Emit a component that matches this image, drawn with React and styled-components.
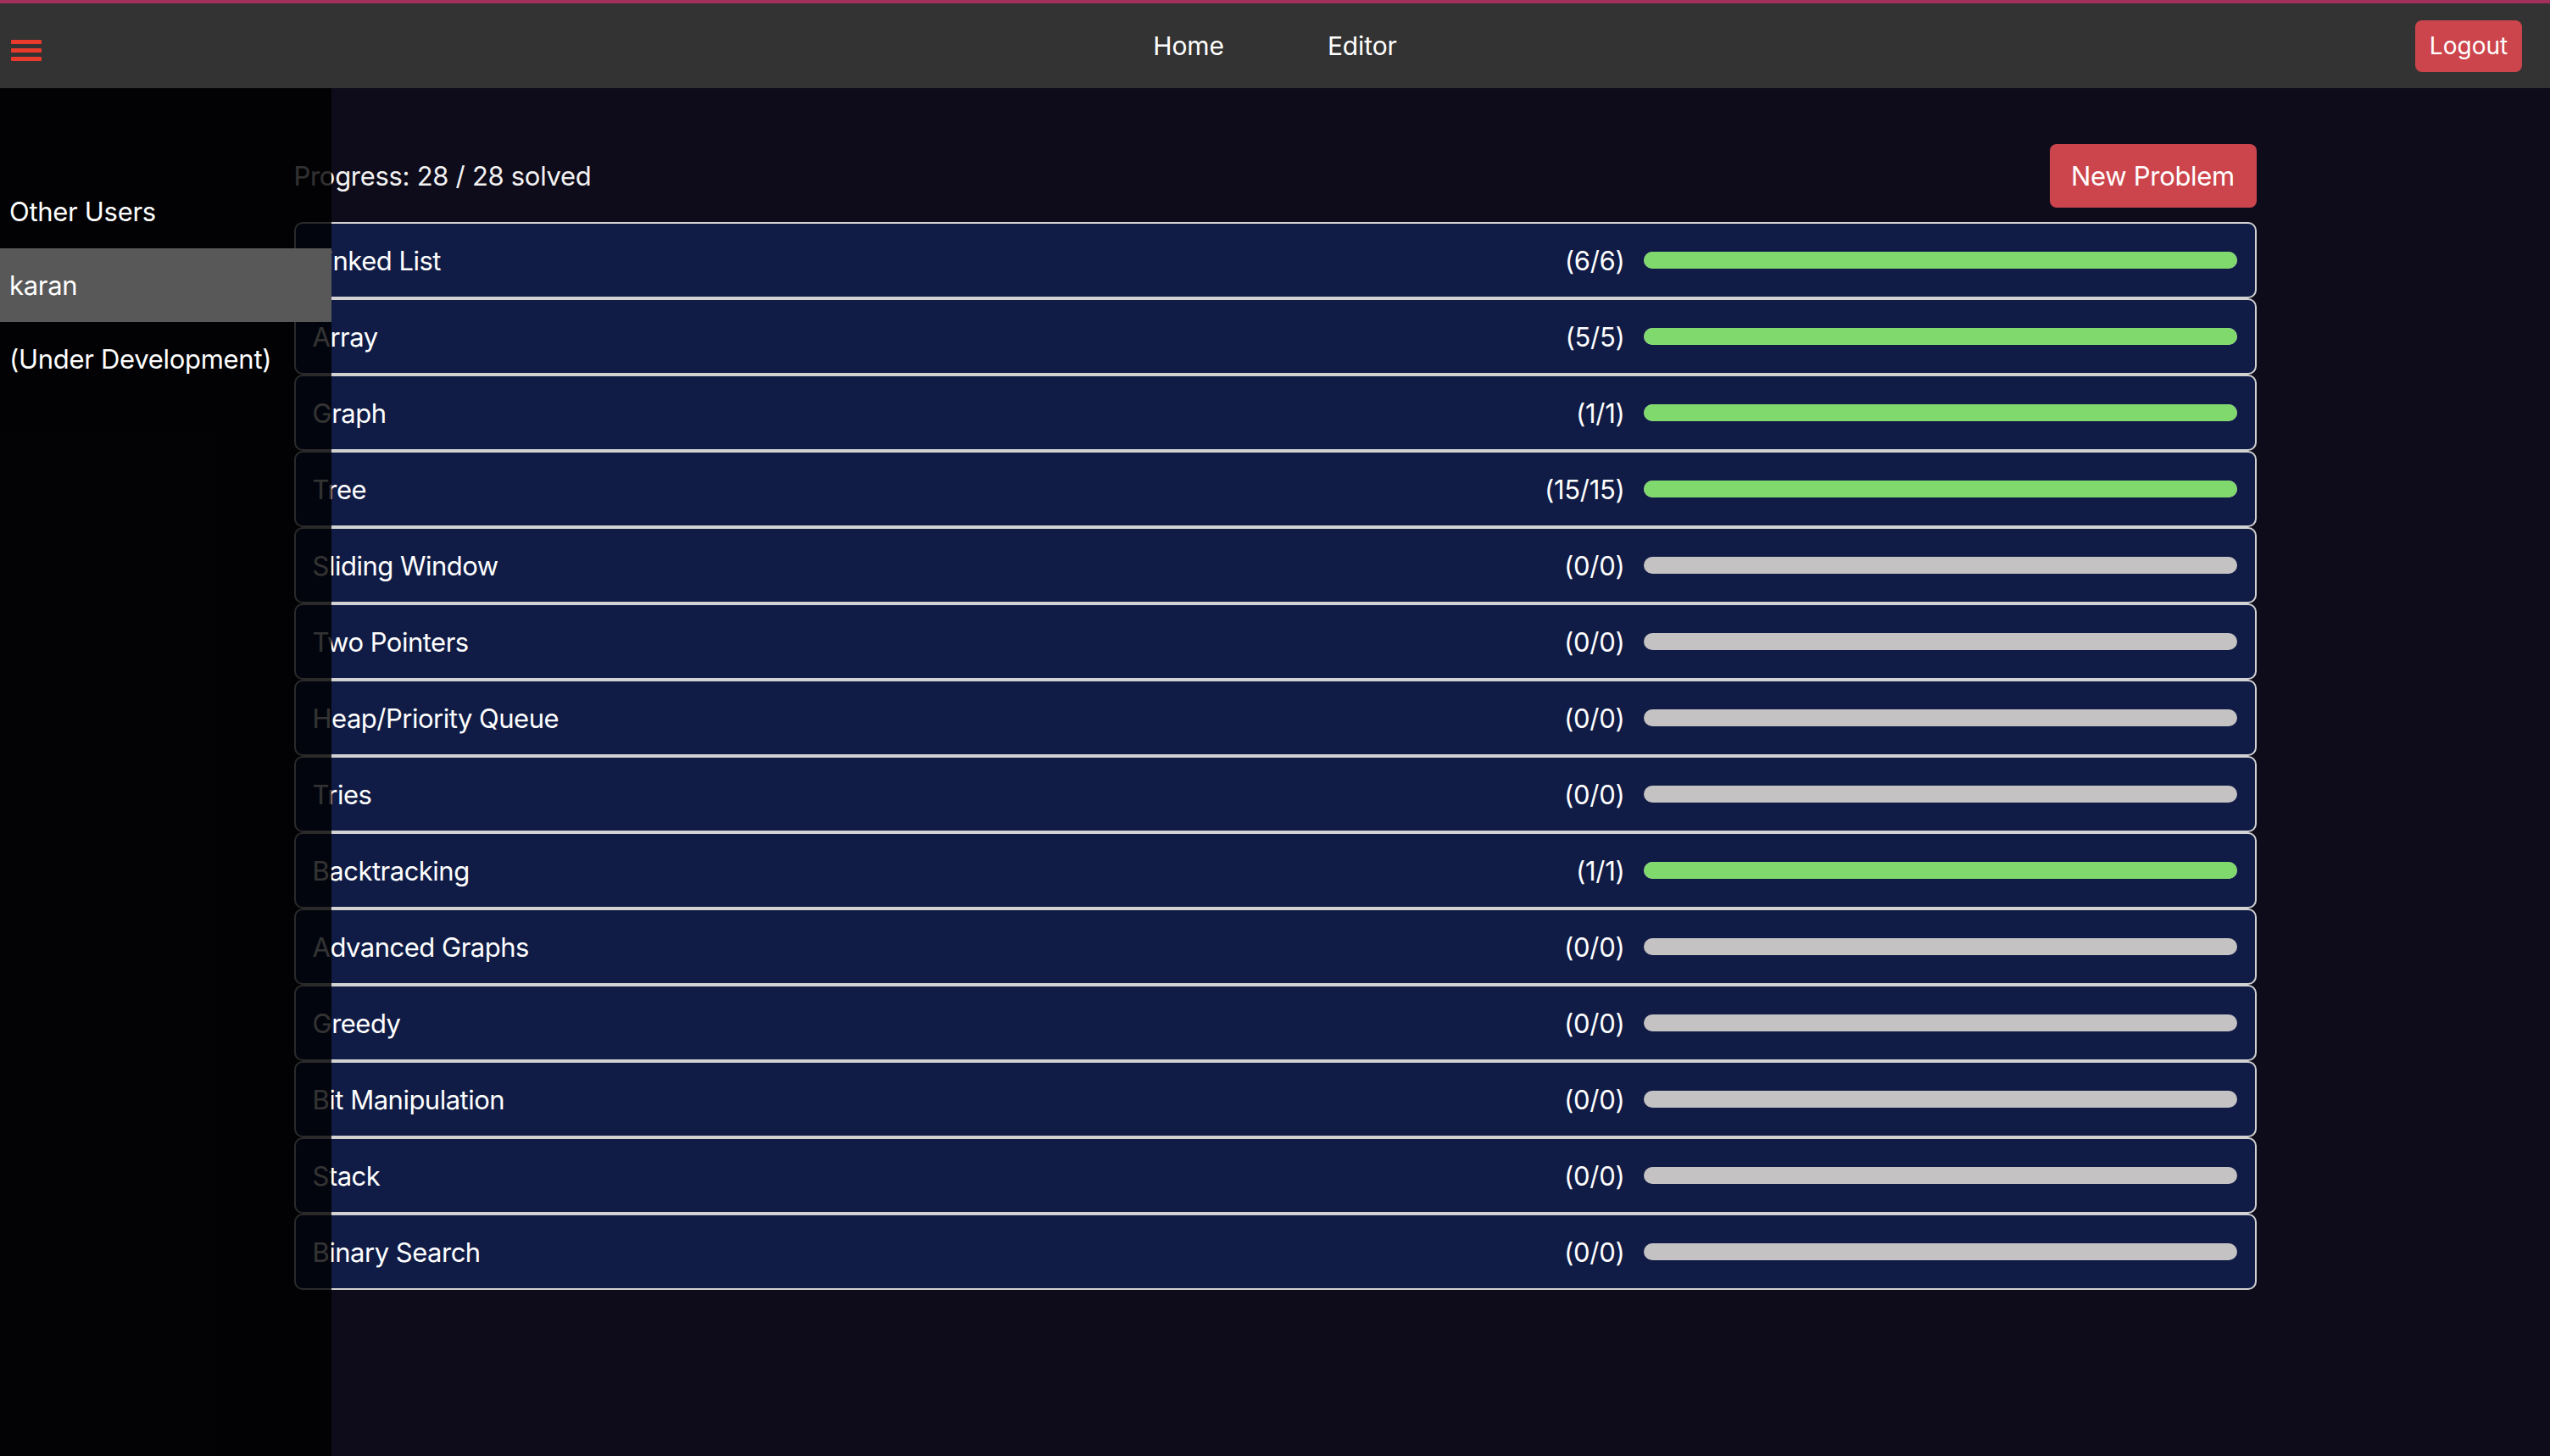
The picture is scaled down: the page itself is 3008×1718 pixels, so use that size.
import React from "react";
import styled, { createGlobalStyle } from "styled-components";

const topics = [
  { name: "Linked List", solved: 6, total: 6 },
  { name: "Array", solved: 5, total: 5 },
  { name: "Graph", solved: 1, total: 1 },
  { name: "Tree", solved: 15, total: 15 },
  { name: "Sliding Window", solved: 0, total: 0 },
  { name: "Two Pointers", solved: 0, total: 0 },
  { name: "Heap/Priority Queue", solved: 0, total: 0 },
  { name: "Tries", solved: 0, total: 0 },
  { name: "Backtracking", solved: 1, total: 1 },
  { name: "Advanced Graphs", solved: 0, total: 0 },
  { name: "Greedy", solved: 0, total: 0 },
  { name: "Bit Manipulation", solved: 0, total: 0 },
  { name: "Stack", solved: 0, total: 0 },
  { name: "Binary Search", solved: 0, total: 0 },
];

const App = () => {
  const solved = topics.reduce((s, t) => s + t.solved, 0);
  const total = topics.reduce((s, t) => s + t.total, 0);

  return (
    <Page>
      <GlobalStyle />
      <StyledHeader>
        <Burger aria-label="menu">
          <span />
          <span />
          <span />
        </Burger>
        <Nav>
          <NavLink href="#">Home</NavLink>
          <NavLink href="#">Editor</NavLink>
        </Nav>
        <LogoutButton>Logout</LogoutButton>
      </StyledHeader>

      <Main>
        <TopRow>
          <ProgressText>
            Progress: {solved} / {total} solved
          </ProgressText>
          <NewButton>New Problem</NewButton>
        </TopRow>
        <List>
          {topics.map((t) => (
            <Row key={t.name}>
              <TopicName>{t.name}</TopicName>
              <Count>
                ({t.solved}/{t.total})
              </Count>
              <Track>
                {t.total > 0 && (
                  <Fill style={{ width: `${(t.solved / t.total) * 100}%` }} />
                )}
              </Track>
            </Row>
          ))}
        </List>
      </Main>

      <Sidebar>
        <SideItem>Other Users</SideItem>
        <SideItem $active>karan</SideItem>
        <SideItem>(Under Development)</SideItem>
      </Sidebar>
    </Page>
  );
};

const GlobalStyle = createGlobalStyle`
  * { box-sizing: border-box; }
  body {
    margin: 0;
    background: #0e0b1a;
    font-family: Inter, "Noto Sans", "Liberation Sans", sans-serif;
    color: #fff;
  }
`;

const Page = styled.div`
  position: relative;
  min-height: 1718px;
  background: #0e0b1a;
`;

const StyledHeader = styled.header`
  height: 104px;
  border-top: 4px solid #a3305c;
  background: #333333;
  display: grid;
  grid-template-columns: 1fr auto 1fr;
  align-items: center;
`;

const Burger = styled.button`
  justify-self: start;
  display: flex;
  flex-direction: column;
  gap: 5px;
  margin: 10px 0 0 13px;
  padding: 0;
  background: none;
  border: none;
  cursor: pointer;

  span {
    display: block;
    width: 36px;
    height: 5px;
    background: #ea3a2b;
    border-radius: 1px;
  }
`;

const Nav = styled.nav`
  display: flex;
  align-items: center;
  gap: 122px;
`;

const NavLink = styled.a`
  color: #fff;
  text-decoration: none;
  font-size: 30px;
  letter-spacing: -0.1px;
`;

const LogoutButton = styled.button`
  justify-self: end;
  margin-right: 33px;
  width: 126px;
  height: 61px;
  border: none;
  border-radius: 8px;
  background: #cd454c;
  color: #fff;
  font-family: inherit;
  font-size: 28px;
  cursor: pointer;
`;

const Main = styled.main`
  width: 2315px;
  margin: 0 auto;
  padding-top: 66px;
`;

const TopRow = styled.div`
  display: flex;
  justify-content: space-between;
  align-items: center;
  margin-bottom: 17px;
`;

const ProgressText = styled.div`
  font-size: 31px;
  letter-spacing: -0.3px;
  color: #f2f2f2;
`;

const NewButton = styled.button`
  width: 244px;
  height: 75px;
  border: none;
  border-radius: 8px;
  background: #cd454c;
  color: #fff;
  font-family: inherit;
  font-size: 31px;
  letter-spacing: -0.3px;
  cursor: pointer;
`;

const List = styled.div`
  display: flex;
  flex-direction: column;
`;

const Row = styled.div`
  height: 90px;
  display: flex;
  align-items: center;
  padding: 0 21px 0 20px;
  background: #101c46;
  border: 2px solid #d2d2d2;
  border-radius: 10px;
`;

const TopicName = styled.span`
  flex: 1;
  font-size: 31px;
  letter-spacing: -0.5px;
`;

const Count = styled.span`
  font-size: 31px;
  letter-spacing: -0.3px;
  margin-right: 22px;
`;

const Track = styled.div`
  width: 700px;
  height: 20px;
  border-radius: 10px;
  background: #c4c2c3;
  overflow: hidden;
`;

const Fill = styled.div`
  height: 100%;
  border-radius: 10px;
  background: #80d96c;
`;

const Sidebar = styled.aside`
  position: absolute;
  top: 104px;
  left: 0;
  bottom: 0;
  width: 391px;
  padding-top: 102px;
  background: rgba(0, 0, 0, 0.8);
`;

const SideItem = styled.div`
  height: 87px;
  display: flex;
  align-items: center;
  padding-left: 11px;
  font-size: 31px;
  letter-spacing: -0.3px;
  color: #fff;
  background: ${({ $active }) => ($active ? "#585858" : "transparent")};
`;

export default App;
